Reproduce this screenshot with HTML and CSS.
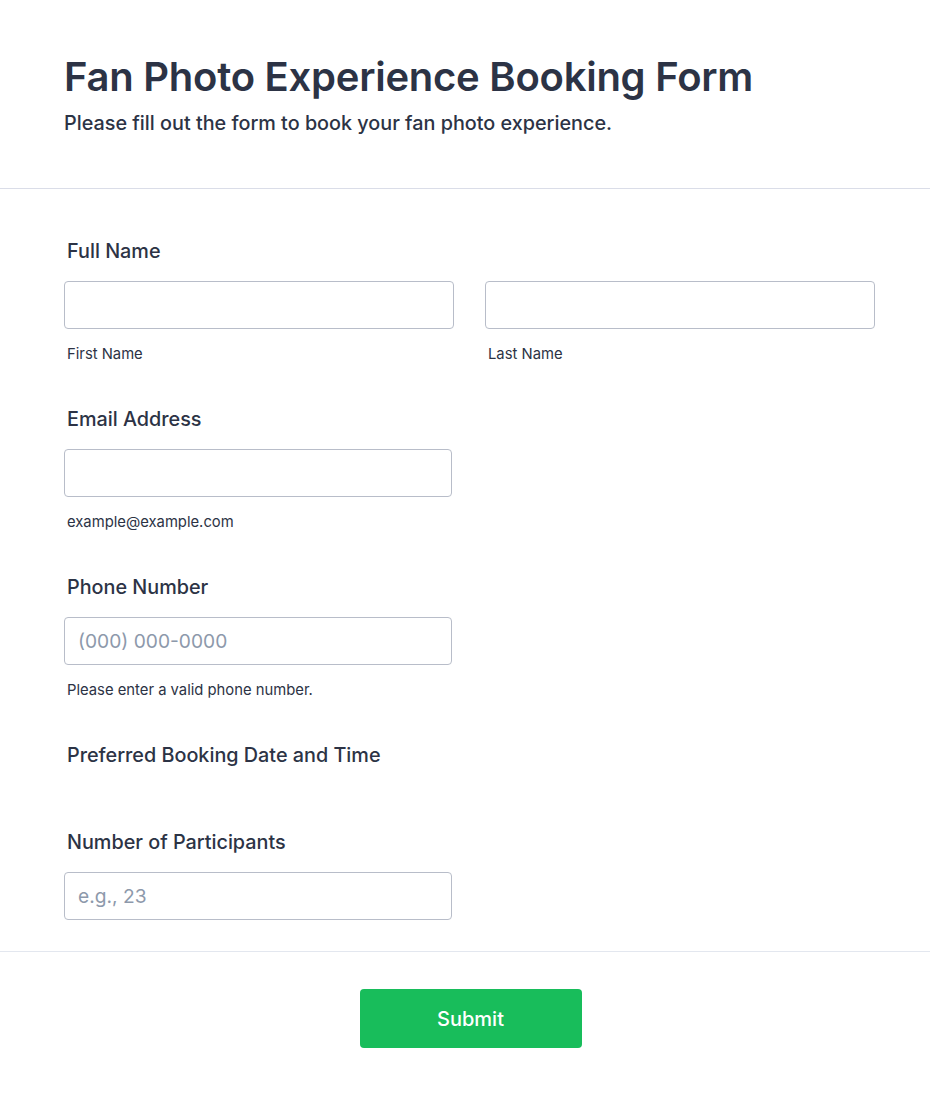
FILE: index.html
```html
<!DOCTYPE html>
<html lang="en">
<head>
<meta charset="utf-8">
<title>Fan Photo Experience Booking Form</title>
<link rel="stylesheet" href="styles.css">
</head>
<body>
<div class="page">
  <header class="form-header">
    <h1 class="form-title">Fan Photo Experience Booking Form</h1>
    <p class="form-subtitle">Please fill out the form to book your fan photo experience.</p>
  </header>
  <main class="form-body">
    <div class="field">
      <label class="field-label">Full Name</label>
      <div class="name-row">
        <div class="name-col">
          <input class="text-input" type="text">
          <span class="sublabel">First Name</span>
        </div>
        <div class="name-col">
          <input class="text-input" type="text">
          <span class="sublabel">Last Name</span>
        </div>
      </div>
    </div>
    <div class="field">
      <label class="field-label">Email Address</label>
      <input class="text-input half" type="email">
      <span class="sublabel">example@example.com</span>
    </div>
    <div class="field">
      <label class="field-label">Phone Number</label>
      <input class="text-input half" type="tel" placeholder="(000) 000-0000">
      <span class="sublabel">Please enter a valid phone number.</span>
    </div>
    <div class="field field-empty">
      <label class="field-label">Preferred Booking Date and Time</label>
    </div>
    <div class="field field-last">
      <label class="field-label">Number of Participants</label>
      <input class="text-input half" type="text" placeholder="e.g., 23">
    </div>
  </main>
  <footer class="form-footer">
    <button class="submit-btn" type="button">Submit</button>
  </footer>
</div>
</body>
</html>
```

FILE: styles.css
```css
* { box-sizing: border-box; }
html, body { margin: 0; padding: 0; background: #ffffff; }
body {
  font-family: Inter, "Noto Sans", "Liberation Sans", sans-serif;
  color: #2c3345;
}
.form-header {
  padding: 53px 64px 51px;
  border-bottom: 1px solid #dadde8;
}
.form-title {
  margin: 0;
  font-size: 40px;
  line-height: 48px;
  font-weight: 600;
  letter-spacing: -0.25px;
}
.form-subtitle {
  margin: 8px 0 0;
  font-size: 19.8px;
  line-height: 28px;
  font-weight: 500;
}
.form-body {
  padding: 48px 55px 31px 64px;
  border-bottom: 1px solid #e3e7ef;
}
.field {
  display: flex;
  flex-direction: column;
  align-items: flex-start;
  margin-bottom: 42px;
}
.field-empty { margin-bottom: 59px; }
.field-last { margin-bottom: 0; }
.field-label {
  font-size: 19.8px;
  line-height: 28px;
  font-weight: 500;
  padding-left: 3px;
  margin-bottom: 16px;
}
.field-empty .field-label { margin-bottom: 0; }
.name-row {
  display: grid;
  grid-template-columns: 1fr 1fr;
  column-gap: 31px;
  width: 100%;
}
.name-col {
  display: flex;
  flex-direction: column;
}
.text-input {
  display: block;
  width: 100%;
  height: 48px;
  border: 1px solid #b8bdc9;
  border-radius: 4px;
  padding: 0 13px;
  font-family: inherit;
  font-size: 19.2px;
  color: #2c3345;
  background: #ffffff;
  outline: none;
}
.text-input.half { width: 388px; }
.text-input::placeholder { color: #8d99ab; }
.sublabel {
  display: block;
  margin-top: 16px;
  padding-left: 3px;
  font-size: 14.8px;
  line-height: 18px;
  font-weight: 400;
  color: #2c3345;
}
.form-footer {
  display: flex;
  justify-content: center;
  padding: 37px 0 50px;
}
.submit-btn {
  width: 222px;
  height: 59px;
  margin-left: 11px;
  border: none;
  border-radius: 4px;
  background: #18bd5b;
  color: #ffffff;
  font-family: inherit;
  font-size: 20px;
  font-weight: 500;
  cursor: pointer;
}
```
